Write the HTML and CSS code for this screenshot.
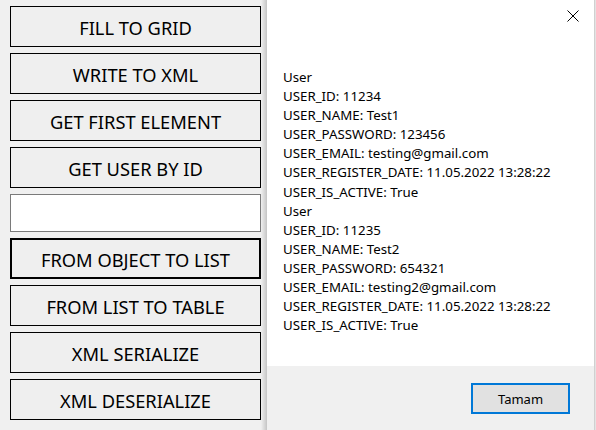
FILE: index.html
```html
<!DOCTYPE html>
<html>
<head>
<meta charset="utf-8">
<link rel="stylesheet" href="styles.css">
</head>
<body>
<div class="main">
  <div class="btn">FILL TO GRID</div>
  <div class="btn">WRITE TO XML</div>
  <div class="btn">GET FIRST ELEMENT</div>
  <div class="btn">GET USER BY ID</div>
  <div class="textbox"></div>
  <div class="btn btn-focus">FROM OBJECT TO LIST</div>
  <div class="btn">FROM LIST TO TABLE</div>
  <div class="btn">XML SERIALIZE</div>
  <div class="btn">XML DESERIALIZE</div>
</div>
<div class="shadow"></div>
<div class="dialog">
  <div class="dialog-body">
    <div class="titlebar">
      <svg class="close" width="12" height="12" viewBox="0 0 12 12"><path d="M0.5 0.5L11.5 11.5M11.5 0.5L0.5 11.5" stroke="#000" stroke-width="1" fill="none"/></svg>
    </div>
    <div class="message">
      <div>User</div>
      <div>USER_ID: 11234</div>
      <div>USER_NAME: Test1</div>
      <div>USER_PASSWORD: 123456</div>
      <div>USER_EMAIL: testing@gmail.com</div>
      <div>USER_REGISTER_DATE: 11.05.2022 13:28:22</div>
      <div>USER_IS_ACTIVE: True</div>
      <div>User</div>
      <div>USER_ID: 11235</div>
      <div>USER_NAME: Test2</div>
      <div>USER_PASSWORD: 654321</div>
      <div>USER_EMAIL: testing2@gmail.com</div>
      <div>USER_REGISTER_DATE: 11.05.2022 13:28:22</div>
      <div>USER_IS_ACTIVE: True</div>
    </div>
  </div>
  <div class="dialog-footer">
    <div class="ok">Tamam</div>
  </div>
</div>
<div class="edge"></div>
</body>
</html>
```
FILE: styles.css
```css
html, body {
  margin: 0;
  padding: 0;
  width: 596px;
  height: 430px;
  overflow: hidden;
  background: #f0f0f0;
  font-family: "Noto Sans", "Open Sans", sans-serif;
}
.main {
  display: flex;
  flex-direction: column;
  gap: 6px;
  padding: 6px 0 0 10px;
  width: 251px;
}
.btn {
  box-sizing: border-box;
  height: 41px;
  border: 1px solid #000;
  background: #efefef;
  display: flex;
  align-items: center;
  justify-content: center;
  font-size: 18.3px;
  color: #000;
  padding-top: 2px;
}
.btn-focus {
  border-width: 2px;
}
.textbox {
  box-sizing: border-box;
  height: 38px;
  border: 1px solid #7a7a7a;
  background: #fff;
}
.shadow {
  position: absolute;
  left: 261px;
  top: 0;
  width: 6px;
  height: 430px;
  background: linear-gradient(to right, rgba(0,0,0,0), rgba(0,0,0,0.18));
}
.dialog {
  position: absolute;
  left: 267px;
  top: 0;
  width: 327px;
  height: 430px;
  display: flex;
  flex-direction: column;
}
.dialog-body {
  background: #fff;
  height: 366px;
}
.titlebar {
  display: flex;
  justify-content: flex-end;
  padding: 10px 15px 0 0;
  height: 22px;
}
.message {
  padding: 36px 0 0 16px;
  font-size: 13.3px;
  line-height: 19.1px;
  color: #000;
}
.dialog-footer {
  flex: 1;
  background: #f0f0f0;
  display: flex;
  justify-content: flex-end;
  align-items: flex-start;
  padding: 17px 24px 0 0;
}
.ok {
  box-sizing: border-box;
  width: 99px;
  height: 31px;
  border: 2px solid #0078d7;
  background: #e1e1e1;
  display: flex;
  align-items: center;
  justify-content: center;
  font-size: 13px;
  color: #000;
}
.edge {
  position: absolute;
  left: 594px;
  top: 0;
  width: 2px;
  height: 430px;
  background: #e3e3e3;
  border-left: 1px solid #d0d0d0;
  box-sizing: border-box;
}
```
